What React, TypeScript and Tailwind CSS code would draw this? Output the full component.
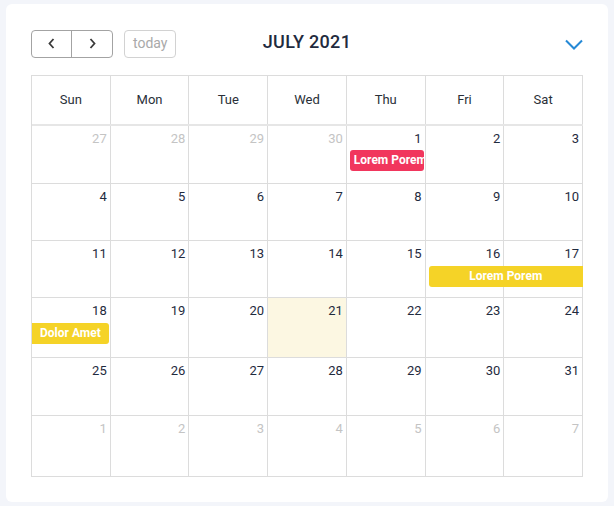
const weeks: { day: number; muted?: boolean; today?: boolean }[][] = [
  [27, 28, 29, 30].map((d) => ({ day: d, muted: true })).concat([1, 2, 3].map((d) => ({ day: d }))),
  [4, 5, 6, 7, 8, 9, 10].map((d) => ({ day: d })),
  [11, 12, 13, 14, 15, 16, 17].map((d) => ({ day: d })),
  [18, 19, 20, 21, 22, 23, 24].map((d) => ({ day: d, today: d === 21 })),
  [25, 26, 27, 28, 29, 30, 31].map((d) => ({ day: d })),
  [1, 2, 3, 4, 5, 6, 7].map((d) => ({ day: d, muted: true })),
];

// row heights as drawn
const rowH = ["h-[58px]", "h-[57px]", "h-[57px]", "h-[60px]", "h-[58px]", "h-[61px]"];

const colStart = [
  "col-start-1",
  "col-start-2",
  "col-start-3",
  "col-start-4",
  "col-start-5",
  "col-start-6",
  "col-start-7",
];

const days = ["Sun", "Mon", "Tue", "Wed", "Thu", "Fri", "Sat"];

const Event = ({ week }: { week: number }) => {
  if (week === 0)
    return (
      <div className="col-start-5 row-start-2 mt-[3px] ml-[3px] mr-[2px] h-[21px] rounded-[3px] bg-[#f1365d] px-1 text-[12px] leading-[21px] font-bold text-white whitespace-nowrap overflow-hidden">
        Lorem Porem
      </div>
    );
  if (week === 2)
    return (
      <div className="col-start-6 col-span-2 row-start-2 mt-[4px] ml-[3px] h-[21px] rounded-l-[3px] bg-[#f5d327] text-center text-[12px] leading-[21px] font-bold text-white whitespace-nowrap overflow-hidden">
        Lorem Porem
      </div>
    );
  if (week === 3)
    return (
      <div className="col-start-1 row-start-2 mt-[4px] mr-[2px] h-[21px] rounded-r-[3px] bg-[#f5d327] text-center text-[12px] leading-[21px] font-bold text-white whitespace-nowrap overflow-hidden">
        Dolor Amet
      </div>
    );
  return null;
};

const App = () => {
  return (
    <div
      className="min-h-screen bg-[#f3f5fa] px-[6px] pt-[4px] pb-[4px]"
      style={{ fontFamily: "Roboto, 'Liberation Sans', sans-serif" }}
    >
      <div className="h-[498px] rounded-[6px] bg-white px-[25px] pt-[25px]">
        {/* toolbar */}
        <div className="flex items-center h-[29px]">
          <div className="flex flex-1 items-center gap-[11px]">
            <div className="flex h-[28px] rounded-[4px] border border-[#a3a3a3]">
              <button className="flex w-[40px] items-center justify-center border-r border-[#a3a3a3]">
                <svg width="9" height="13" viewBox="0 0 9 13" fill="none">
                  <path d="M6.5 2L2.5 6.5l4 4.5" stroke="#3a3a3a" strokeWidth="1.8" />
                </svg>
              </button>
              <button className="flex w-[40px] items-center justify-center">
                <svg width="9" height="13" viewBox="0 0 9 13" fill="none">
                  <path d="M2.5 2l4 4.5-4 4.5" stroke="#3a3a3a" strokeWidth="1.8" />
                </svg>
              </button>
            </div>
            <button className="h-[28px] rounded-[4px] border border-[#d2d2d2] px-[8px] text-[14px] text-[#a9a9a9]">
              today
            </button>
          </div>
          <h2 className="mb-[5px] text-[18px] font-medium text-[#1f2b3e] tracking-[0.3px]">JULY 2021</h2>
          <div className="flex flex-1 justify-end pt-[2px]">
            <svg width="18" height="11" viewBox="0 0 18 11" fill="none">
              <path d="M1 1.5l8 8 8-8" stroke="#2589d6" strokeWidth="2" />
            </svg>
          </div>
        </div>

        {/* table */}
        <div className="mt-[17px] border-l border-t border-[#dcdcdc]">
          <div className="grid grid-cols-7 h-[50px] border-b-2 border-[#e6e6e6]">
            {days.map((d) => (
              <div
                key={d}
                className="flex items-center justify-center border-r border-[#dcdcdc] text-[13px] text-[#2a2f38]"
              >
                {d}
              </div>
            ))}
          </div>
          <div className="flex flex-col">
            {weeks.map((week, wi) => (
              <div key={wi} className={`grid ${rowH[wi]} grid-cols-7 grid-rows-[auto_auto_1fr]`}>
                {week.map((c, ci) => (
                  <div
                    key={"bg" + ci}
                    className={`${colStart[ci]} row-start-1 row-span-3 border-r border-b border-[#dcdcdc] ${
                      c.today ? "bg-[#fcf7e2]" : ""
                    }`}
                  />
                ))}
                {week.map((c, ci) => (
                  <div
                    key={"n" + ci}
                    className={`${colStart[ci]} row-start-1 pr-[4px] pt-[4px] text-right text-[13px] leading-[17px] ${
                      c.muted ? "text-[#c4c4c4]" : "text-[#1f2b3e]"
                    }`}
                  >
                    {c.day}
                  </div>
                ))}
                <Event week={wi} />
              </div>
            ))}
          </div>
        </div>
      </div>
    </div>
  );
};

export default App;
